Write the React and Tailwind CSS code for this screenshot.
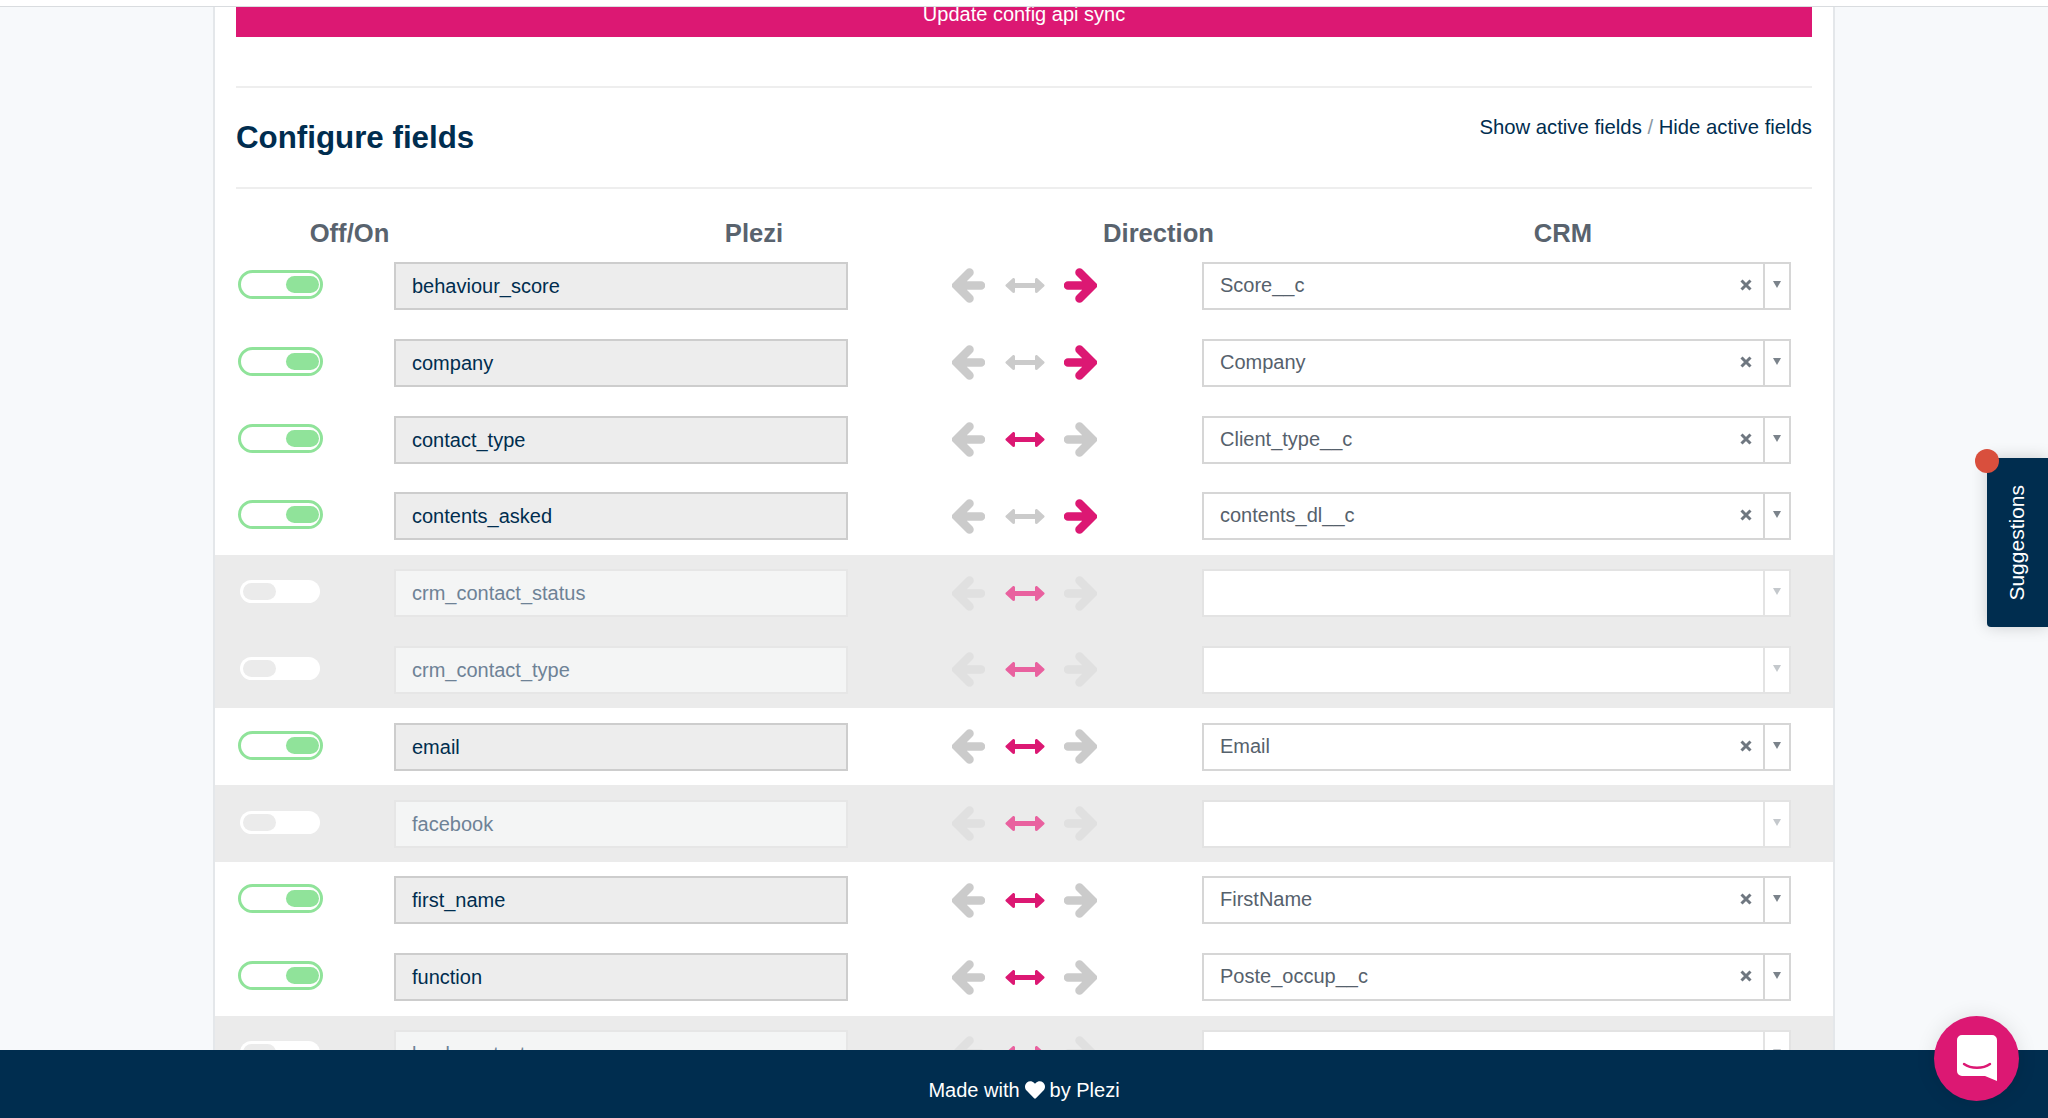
import { FaHeart } from "react-icons/fa";

const PINK = "#dc1873";

const fields = [
  { name: "behaviour_score", crm: "Score__c", dir: "right" },
  { name: "company", crm: "Company", dir: "right" },
  { name: "contact_type", crm: "Client_type__c", dir: "both" },
  { name: "contents_asked", crm: "contents_dl__c", dir: "right" },
  { name: "crm_contact_status", off: true },
  { name: "crm_contact_type", off: true },
  { name: "email", crm: "Email", dir: "both" },
  { name: "facebook", off: true },
  { name: "first_name", crm: "FirstName", dir: "both" },
  { name: "function", crm: "Poste_occup__c", dir: "both" },
  { name: "lead_contact", off: true },
];

function SideArrow({ color, flip }) {
  return (
    <svg width="33" height="35" viewBox="0 0 33 35" className={flip ? "-scale-x-100" : ""}>
      <path
        d="M29 17.5H7M17.5 4.5L4.5 17.5L17.5 30.5"
        fill="none"
        stroke={color}
        strokeWidth="8.5"
        strokeLinecap="round"
        strokeLinejoin="miter"
      />
    </svg>
  );
}

function BothArrow({ color }) {
  return (
    <svg width="40" height="15" viewBox="0 0 40 15">
      <path d="M6 5H34V10H6Z" fill={color} />
      <path
        d="M2 7.5L8.5 1.5V13.5ZM38 7.5L31.5 1.5V13.5Z"
        fill={color}
        stroke={color}
        strokeWidth="3"
        strokeLinejoin="round"
      />
    </svg>
  );
}

function Toggle({ off }) {
  if (off) {
    return (
      <div className="w-[80px] h-[23px] rounded-full bg-white p-[3px] ml-[2px] mb-[3px]">
        <div className="w-[33px] h-[17px] rounded-full bg-[#ebebeb]" />
      </div>
    );
  }
  return (
    <div className="w-[85px] h-[29px] rounded-full bg-white border-[3px] border-[#90e39a] flex items-center justify-end pr-[1px] mb-[3px]">
      <div className="w-[33px] h-[17px] rounded-full bg-[#90e39a]" />
    </div>
  );
}

function Row({ field }) {
  const { name, crm, dir, off } = field;
  const grey = off ? "#e0e0e0" : "#cbcbcb";
  return (
    <div className={`flex items-center h-[76.8px] pl-[23px] ${off ? "bg-[#ebebeb]" : "bg-white"}`}>
      <div className="w-[156px] shrink-0">
        <Toggle off={off} />
      </div>
      <div
        className={`w-[454px] h-[48px] shrink-0 flex items-center pl-[16px] text-[20px] border-2 ${
          off
            ? "bg-[#f4f5f5] border-[#e6e6e6] text-[#6e8296]"
            : "bg-[#ededed] border-[#cdcdcd] text-[#002d4f]"
        }`}
      >
        {name}
      </div>
      <div className="w-[104px] shrink-0" />
      <div className="w-[145px] shrink-0 flex items-center justify-between">
        <SideArrow color={grey} />
        <BothArrow color={off ? "#e9619f" : dir === "both" ? PINK : "#cbcbcb"} />
        <SideArrow color={dir === "right" ? PINK : grey} flip />
      </div>
      <div className="w-[105px] shrink-0" />
      <div
        className={`w-[589px] h-[48px] shrink-0 flex bg-white border-2 ${
          off ? "border-[#e3e3e3]" : "border-[#d6d6d6]"
        }`}
      >
        <div className="flex-1 flex items-center pl-[16px] pr-[11px] pb-[2px] text-[20px] text-[#56616c]">
          <span className="flex-1">{crm}</span>
          {!off && (
            <svg width="12" height="12" viewBox="0 0 12 12">
              <path d="M1.5 1.5L10.5 10.5M10.5 1.5L1.5 10.5" stroke="#6f7780" strokeWidth="3" />
            </svg>
          )}
        </div>
        <div className={`w-[26px] flex items-center justify-center pb-[3px] border-l-2 ${off ? "border-[#e3e3e3]" : "border-[#d6d6d6]"}`}>
          <svg width="8" height="7" viewBox="0 0 8 7">
            <path d="M0 0H8L4 7Z" fill={off ? "#c4c8cc" : "#7b838b"} />
          </svg>
        </div>
      </div>
    </div>
  );
}

export default function App() {
  return (
    <div className="h-screen flex flex-col overflow-hidden relative bg-[#f7f9fb] text-[#002d4f] font-['Liberation_Sans',Arial,sans-serif]">
      <div className="h-[7px] shrink-0 bg-white border-b border-[#d9dcdf] relative z-10" />

      <main className="flex-1 min-h-0 overflow-hidden">
        <div className="w-[1622px] mx-auto bg-white border-x-2 border-[#e4e7ea] -mt-[15px]">
          <div className="px-[21px]">
            <div className="h-[45px] pb-[1px] bg-[#dc1873] text-white text-[20px] flex items-center justify-center">
              Update config api sync
            </div>
            <div className="h-[51px] border-b-2 border-[#eeeeee]" />
            <div className="h-[101px] border-b-2 border-[#eeeeee] flex justify-between items-start">
              <h1 className="text-[31.3px] font-bold mt-[30px] leading-[40px]">Configure fields</h1>
              <div className="text-[20.3px] leading-[28px] mt-[25px]">
                Show active fields <span className="text-[#8a97a3]">/</span> Hide active fields
              </div>
            </div>
          </div>

          <div className="h-[58.6px] pl-[74.5px] flex gap-[284.5px] pt-[29px] text-[25.6px] leading-[30px] font-bold text-[#59636e]">
            <div className="w-[120px] text-center">Off/On</div>
            <div className="w-[120px] text-center">Plezi</div>
            <div className="w-[120px] text-center">Direction</div>
            <div className="w-[120px] text-center">CRM</div>
          </div>

          {fields.map((f) => (
            <Row key={f.name} field={f} />
          ))}
        </div>
      </main>

      <footer className="h-[68px] shrink-0 bg-[#002d4f] text-white text-[20px] flex items-center justify-center gap-[5px] pt-[12px]">
        <span>Made with</span>
        <FaHeart className="w-[20px] h-[20px]" />
        <span>by Plezi</span>
      </footer>

      <div className="absolute right-0 top-[458px] w-[61px] h-[169px] bg-[#002d4f] rounded-l-[4px] shadow-[0_0_16px_rgba(0,0,0,0.18)] flex items-center justify-center pr-[2px]">
        <span className="text-[21px] text-white [writing-mode:vertical-rl] rotate-180">Suggestions</span>
        <div className="absolute -left-[12px] -top-[9px] w-[24px] h-[24px] rounded-full bg-[#d94f3d]" />
      </div>

      <div className="absolute left-[1934px] top-[1015.5px] w-[85px] h-[85px] rounded-full bg-[#dc1873] shadow-[0_0_20px_rgba(0,0,0,0.1)] flex items-center justify-center">
        <svg width="40" height="46" viewBox="0 0 40 46">
          <path
            d="M5 0H35A5 5 0 0 1 40 5V46L28 41H5A5 5 0 0 1 0 36V5A5 5 0 0 1 5 0Z"
            fill="#fff"
          />
          <path
            d="M7 29C14 34 26 34 33 29"
            fill="none"
            stroke="#dc1873"
            strokeWidth="2.4"
            strokeLinecap="round"
          />
        </svg>
      </div>
    </div>
  );
}
